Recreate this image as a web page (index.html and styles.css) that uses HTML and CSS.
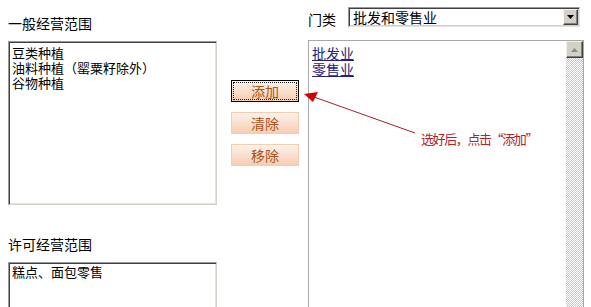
FILE: index.html
```html
<!DOCTYPE html>
<html lang="zh-CN">
<head>
<meta charset="utf-8">
<title>经营范围</title>
<link rel="stylesheet" href="styles.css">
</head>
<body>
<div class="page">
  <div class="col-left">
    <div class="label label-top">一般经营范围</div>
    <div class="listbox list-general">
      <div class="opt">豆类种植</div>
      <div class="opt">油料种植（罂粟籽除外）</div>
      <div class="opt">谷物种植</div>
    </div>
    <div class="label label-permit">许可经营范围</div>
    <div class="listbox list-permit">
      <div class="opt">糕点、面包零售</div>
    </div>
  </div>
  <div class="col-buttons">
    <button class="btn btn-focus"><span class="btn-inner">添加</span></button>
    <button class="btn"><span class="btn-inner">清除</span></button>
    <button class="btn"><span class="btn-inner">移除</span></button>
  </div>
  <div class="col-right">
    <div class="cat-row">
      <span class="cat-label">门类</span>
      <div class="select">
        <span class="select-text">批发和零售业</span>
        <span class="select-btn">
          <svg width="7" height="4" viewBox="0 0 7 4"><polygon points="0,0 7,0 3.5,4" fill="#000"/></svg>
        </span>
      </div>
    </div>
    <div class="catlist">
      <div class="catlist-body">
        <a class="cat-link" href="#">批发业</a>
        <a class="cat-link" href="#">零售业</a>
      </div>
      <div class="vscroll">
        <div class="vscroll-up">
          <svg width="7" height="4" viewBox="0 0 7 4"><polygon points="0,4 7,4 3.5,0" fill="#8a8a8a"/></svg>
        </div>
        <div class="vscroll-track"></div>
      </div>
    </div>
  </div>
</div>
<svg class="annot-arrow" width="591" height="307" viewBox="0 0 591 307">
  <line x1="314" y1="97" x2="415" y2="133" stroke="#a8202a" stroke-width="1"/>
  <polygon points="304,94 318,92 313,102" fill="#d40000"/>
</svg>
<div class="annot-text">选好后，点击“添加”</div>
</body>
</html>
```

FILE: styles.css
```css
html, body {
  margin: 0;
  padding: 0;
  overflow: hidden;
  background: #ffffff;
}

body {
  width: 591px;
  height: 307px;
  position: relative;
  font-family: "Noto Sans CJK SC", "Noto Sans", sans-serif;
  color: #000;
}

.page {
  display: flex;
  align-items: flex-start;
  padding-left: 8px;
  height: 307px;
  overflow: hidden;
}

/* left column */
.col-left {
  width: 209px;
  padding-top: 15px;
  display: flex;
  flex-direction: column;
}

.label {
  font-size: 14px;
  line-height: 16px;
  height: 16px;
  white-space: nowrap;
}

.label-top {
  margin-bottom: 10px;
}

.label-permit {
  margin-top: 31px;
  margin-bottom: 10px;
}

.listbox {
  box-sizing: border-box;
  width: 209px;
  background: #fff;
  border-top: 1px solid #9a9a9a;
  border-left: 1px solid #9a9a9a;
  border-right: 1px solid #d4d0c8;
  border-bottom: 1px solid #d4d0c8;
  box-shadow: inset 1px 1px 0 #404040, inset -1px -1px 0 #e4e2dc;
  padding: 3px 2px 0 3px;
}

.list-general {
  height: 164px;
}

.list-permit {
  height: 45px;
  padding-top: 1px;
  border-bottom: none;
  box-shadow: inset 1px 1px 0 #404040, inset -1px 0 0 #e4e2dc;
}

.opt {
  font-size: 13px;
  line-height: 15px;
  white-space: nowrap;
}

/* buttons */
.col-buttons {
  margin-left: 14px;
  padding-top: 80px;
  width: 68px;
  display: flex;
  flex-direction: column;
  gap: 10px;
}

.btn {
  box-sizing: border-box;
  width: 68px;
  height: 22px;
  margin: 0;
  padding: 0;
  border: 1px solid #f2cdb2;
  background: linear-gradient(#fdf2ea, #f9dcc8 60%, #f6cdb1);
  color: #a9531c;
  font-family: "Noto Sans CJK SC", sans-serif;
  font-size: 14px;
  line-height: 18px;
  display: flex;
  align-items: stretch;
  justify-content: stretch;
}

.btn-inner {
  flex: 1;
  display: block;
  margin: 1px;
  border: 1px solid transparent;
  text-align: center;
  line-height: 16px;
}

.btn-focus {
  border-color: #000;
}

.btn-focus .btn-inner {
  border: 1px dotted #222;
}

/* right column */
.col-right {
  margin-left: 9px;
  width: 276px;
  display: flex;
  flex-direction: column;
}

.cat-row {
  display: flex;
  align-items: center;
  margin-top: 7px;
  height: 20px;
}

.cat-label {
  width: 40px;
  font-size: 14px;
  line-height: 16px;
  padding-top: 3px;
}

.select {
  box-sizing: border-box;
  width: 232px;
  height: 20px;
  display: flex;
  align-items: stretch;
  background: #fff;
  border-top: 1px solid #9a9a9a;
  border-left: 1px solid #9a9a9a;
  border-right: 1px solid #e4e2dc;
  border-bottom: 1px solid #e4e2dc;
  box-shadow: inset 1px 1px 0 #404040, inset -1px -1px 0 #d4d0c8;
  padding: 1px;
}

.select-text {
  flex: 1;
  font-size: 14px;
  line-height: 16px;
  padding-left: 3px;
  white-space: nowrap;
}

.select-btn {
  box-sizing: border-box;
  width: 15px;
  background: #d4d0c8;
  border-top: 1px solid #f4f4f4;
  border-left: 1px solid #f4f4f4;
  border-right: 1px solid #404040;
  border-bottom: 1px solid #404040;
  box-shadow: inset -1px -1px 0 #808080;
  display: flex;
  align-items: center;
  justify-content: center;
}

.catlist {
  box-sizing: border-box;
  margin-top: 13px;
  width: 276px;
  height: 267px;
  border: 1px solid #a8a8a8;
  border-bottom: none;
  display: flex;
  background: #fff;
}

.catlist-body {
  flex: 1;
  display: flex;
  flex-direction: column;
  align-items: flex-start;
  padding: 4px 0 0 3px;
}

.cat-link {
  font-size: 14px;
  line-height: 16px;
  color: #23237c;
  text-decoration: underline;
}

.vscroll {
  width: 17px;
  display: flex;
  flex-direction: column;
}

.vscroll-up {
  box-sizing: border-box;
  height: 17px;
  background: #d4d0c8;
  border-top: 1px solid #f0f0f0;
  border-left: 1px solid #f0f0f0;
  border-right: 1px solid #404040;
  border-bottom: 1px solid #404040;
  box-shadow: inset -1px -1px 0 #808080;
  display: flex;
  align-items: center;
  justify-content: center;
}

.vscroll-track {
  flex: 1;
  background-color: #ffffff;
  background-image: repeating-conic-gradient(#c8c8c8 0 25%, #ffffff 0 50%);
  background-size: 2px 2px;
}

/* annotation overlay */
.annot-arrow {
  position: absolute;
  left: 0;
  top: 0;
  pointer-events: none;
}

.annot-text {
  position: absolute;
  left: 421px;
  top: 131px;
  font-size: 13px;
  line-height: 16px;
  letter-spacing: -1.4px;
  color: #b3222a;
  white-space: nowrap;
}
```
